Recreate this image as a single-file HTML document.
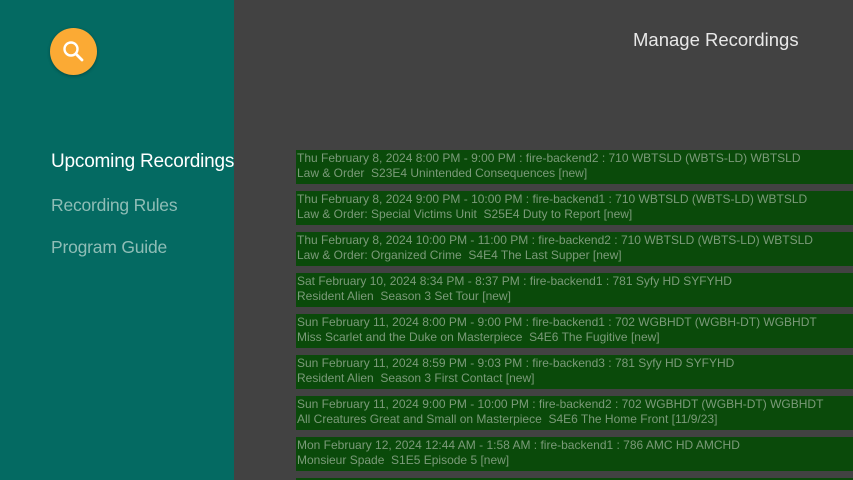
<!DOCTYPE html>
<html><head><meta charset="utf-8"><style>
*{margin:0;padding:0;box-sizing:border-box}
html,body{width:853px;height:480px;overflow:hidden}
body{background:#424242;font-family:"Liberation Sans",sans-serif;position:relative}
#side{position:absolute;left:0;top:0;width:234px;height:480px;background:#046a62;overflow:hidden}
#search{position:absolute;left:50px;top:28px;width:47px;height:47px;border-radius:50%;background:#fbaa34;box-shadow:0 1px 3px rgba(0,0,0,.3)}
.nav{position:absolute;left:51px;font-size:17.5px;color:#8fbdb6;white-space:nowrap;letter-spacing:-0.2px}
#title{position:absolute;left:633px;top:29px;font-size:18.5px;color:#e8e8e8;white-space:nowrap}
.row{position:absolute;left:296px;width:557px;height:34px;background:#0a4a0a;color:#7b9a79;font-size:12px;line-height:15px;padding:1px 0 0 1px;white-space:nowrap;overflow:hidden}
</style></head><body>
<div id="side">
<div id="search"><svg width="47" height="47" viewBox="0 0 47 47"><circle cx="21" cy="21" r="6.5" fill="none" stroke="#fff" stroke-width="2.4"/><line x1="26" y1="26" x2="32" y2="32" stroke="#fff" stroke-width="2.8" stroke-linecap="round"/></svg></div>
<div class="nav" style="top:151px;color:#fff;font-size:19px">Upcoming Recordings</div>
<div class="nav" style="top:195px">Recording Rules</div>
<div class="nav" style="top:237px">Program Guide</div>
</div>
<div id="title">Manage Recordings</div>
<div class="row" style="top:150px">Thu February 8, 2024 8:00 PM - 9:00 PM : fire-backend2 : 710 WBTSLD (WBTS-LD) WBTSLD<br>Law &amp; Order&nbsp; S23E4 Unintended Consequences [new]</div>
<div class="row" style="top:191px">Thu February 8, 2024 9:00 PM - 10:00 PM : fire-backend1 : 710 WBTSLD (WBTS-LD) WBTSLD<br>Law &amp; Order: Special Victims Unit&nbsp; S25E4 Duty to Report [new]</div>
<div class="row" style="top:232px">Thu February 8, 2024 10:00 PM - 11:00 PM : fire-backend2 : 710 WBTSLD (WBTS-LD) WBTSLD<br>Law &amp; Order: Organized Crime&nbsp; S4E4 The Last Supper [new]</div>
<div class="row" style="top:273px">Sat February 10, 2024 8:34 PM - 8:37 PM : fire-backend1 : 781 Syfy HD SYFYHD<br>Resident Alien&nbsp; Season 3 Set Tour [new]</div>
<div class="row" style="top:314px">Sun February 11, 2024 8:00 PM - 9:00 PM : fire-backend1 : 702 WGBHDT (WGBH-DT) WGBHDT<br>Miss Scarlet and the Duke on Masterpiece&nbsp; S4E6 The Fugitive [new]</div>
<div class="row" style="top:355px">Sun February 11, 2024 8:59 PM - 9:03 PM : fire-backend3 : 781 Syfy HD SYFYHD<br>Resident Alien&nbsp; Season 3 First Contact [new]</div>
<div class="row" style="top:396px">Sun February 11, 2024 9:00 PM - 10:00 PM : fire-backend2 : 702 WGBHDT (WGBH-DT) WGBHDT<br>All Creatures Great and Small on Masterpiece&nbsp; S4E6 The Home Front [11/9/23]</div>
<div class="row" style="top:437px">Mon February 12, 2024 12:44 AM - 1:58 AM : fire-backend1 : 786 AMC HD AMCHD<br>Monsieur Spade&nbsp; S1E5 Episode 5 [new]</div>
<div class="row" style="top:478px;height:2px"></div>
</body></html>
